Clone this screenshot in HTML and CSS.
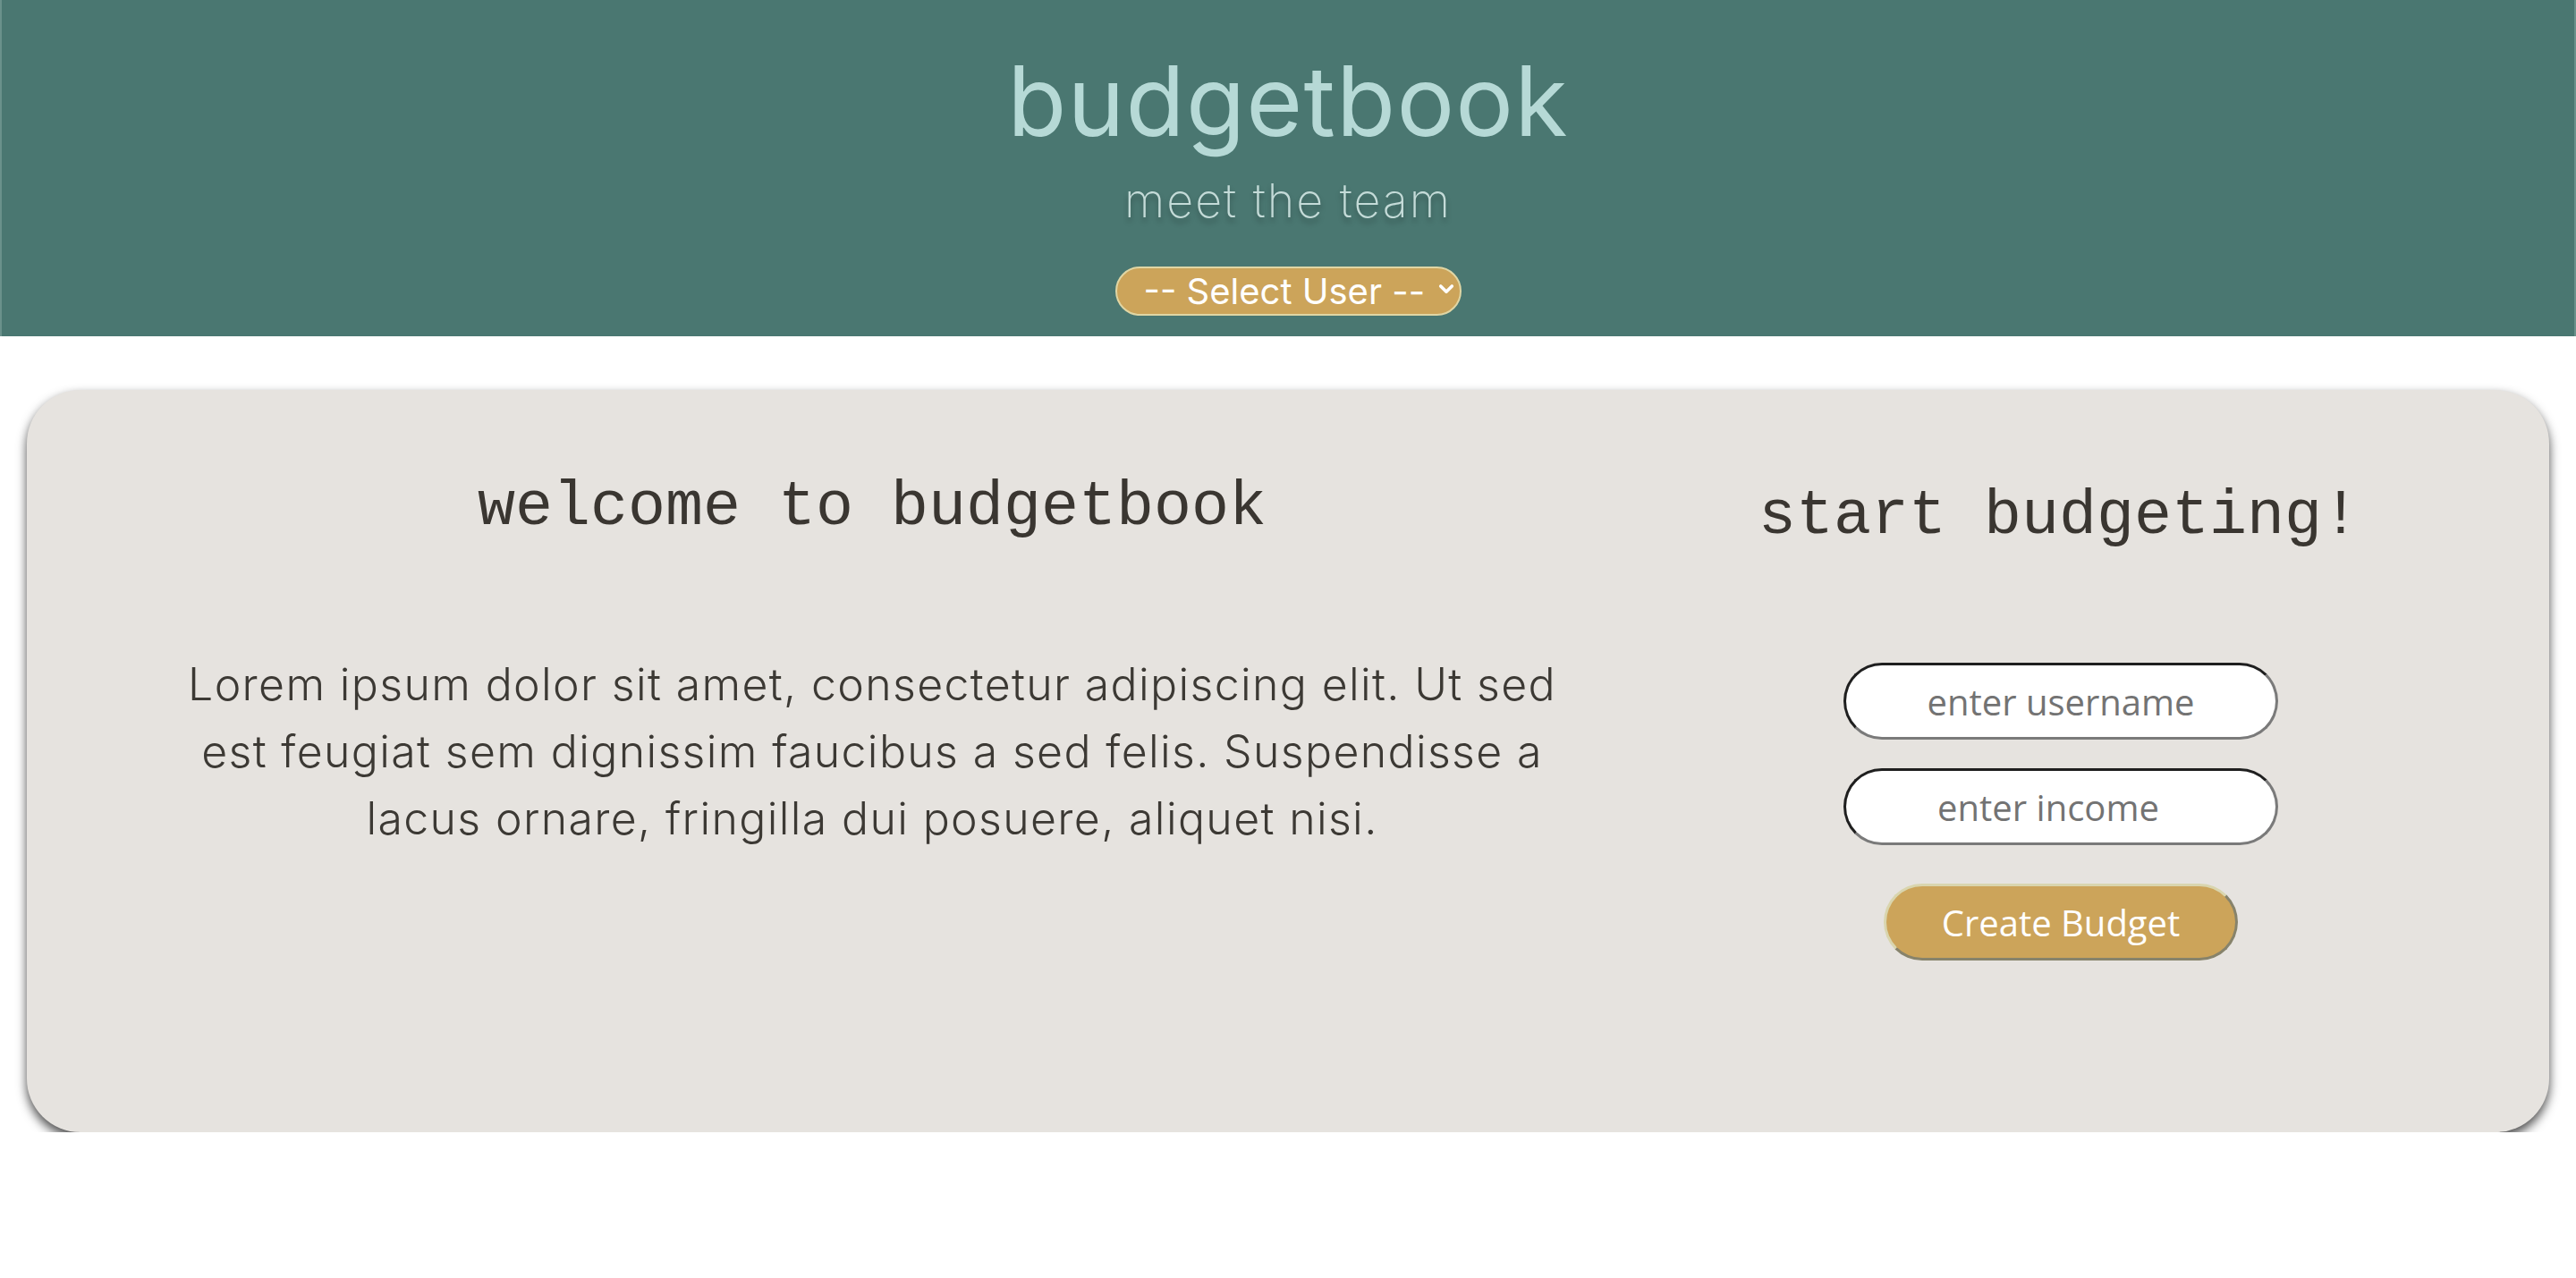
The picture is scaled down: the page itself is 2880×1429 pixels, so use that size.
FILE: index.html
```html
<!DOCTYPE html>
<html lang="en">
<head>
<meta charset="utf-8">
<title>budgetbook</title>
<link rel="stylesheet" href="styles.css">
</head>
<body>
<header class="site-header">
  <h1 class="brand">budgetbook</h1>
  <p class="tagline">meet the team</p>
  <div class="user-select">
    <select class="user-select__control">
      <option>-- Select User --</option>
    </select>
    <svg class="user-select__chevron" viewBox="0 0 20 14" aria-hidden="true"><path d="M3 3 L10 10 L17 3" fill="none" stroke="#fff" stroke-width="4" stroke-linecap="round" stroke-linejoin="round"/></svg>
  </div>
</header>

<main class="card">
  <section class="welcome">
    <h2 class="mono-heading">welcome to budgetbook</h2>
    <p class="intro">Lorem ipsum dolor sit amet, consectetur adipiscing elit. Ut sed est feugiat sem dignissim faucibus a sed felis. Suspendisse a lacus ornare, fringilla dui posuere, aliquet nisi.</p>
  </section>
  <section class="start">
    <h2 class="mono-heading mono-heading--lower">start budgeting!</h2>
    <form class="start-form">
      <input class="pill-input" type="text" placeholder="enter username">
      <input class="pill-input pill-input--number" type="text" placeholder="enter income">
      <button class="create-btn" type="button">Create Budget</button>
    </form>
  </section>
</main>
</body>
</html>
```

FILE: styles.css
```css
html, body {
  margin: 0;
  padding: 0;
  background: #ffffff;
}

body {
  font-family: Inter, "Noto Sans", sans-serif;
}

.site-header {
  background: #4a7771;
  display: flex;
  flex-direction: column;
  align-items: center;
  padding: 59px 0 23px;
  border-left: 2px solid #6a918b;
  border-right: 2px solid #6a918b;
}

.brand {
  margin: 0;
  font-family: Inter, sans-serif;
  font-weight: 400;
  font-size: 108px;
  line-height: 108px;
  color: #b6d9d6;
  letter-spacing: 1.2px;
}

.tagline {
  margin: 28px 0 0;
  font-family: Inter, sans-serif;
  font-weight: 200;
  font-size: 52px;
  line-height: 60px;
  color: #c4dbd8;
  letter-spacing: 2px;
  text-shadow: 0 5px 6px rgba(0, 0, 0, 0.28);
}

.user-select {
  position: relative;
  margin-top: 43px;
  width: 387px;
  height: 55px;
}

.user-select__control {
  appearance: none;
  -webkit-appearance: none;
  width: 100%;
  height: 100%;
  box-sizing: border-box;
  background: #cca45a;
  border: 2px solid #e0d6a4;
  border-radius: 28px;
  color: #ffffff;
  font-family: Inter, sans-serif;
  font-size: 40px;
  padding: 0 0 0 30px;
  outline: none;
}

.user-select__chevron {
  position: absolute;
  right: 8px;
  top: 19px;
  width: 18px;
  height: 13px;
  pointer-events: none;
}

.card {
  margin: 60px 30px 0;
  height: 830px;
  box-sizing: border-box;
  background: #e6e3df;
  border-radius: 60px;
  box-shadow: 0 6px 12px rgba(0, 0, 0, 0.7);
  display: grid;
  grid-template-columns: 1890px 764px;
  align-items: start;
  padding-top: 92px;
}

.welcome,
.start {
  display: flex;
  flex-direction: column;
  align-items: center;
}

.mono-heading {
  margin: 0;
  font-family: "Liberation Mono", "DejaVu Sans Mono", monospace;
  font-weight: 400;
  font-size: 70px;
  line-height: 80px;
  color: #3a3631;
  white-space: nowrap;
}

.mono-heading--lower {
  margin-top: 10px;
}

.intro {
  margin: 120px 0 0;
  width: 1570px;
  text-align: center;
  font-family: Inter, sans-serif;
  font-weight: 300;
  font-size: 50px;
  line-height: 75px;
  color: #3c3934;
  letter-spacing: 1.35px;
}

.start-form {
  margin-top: 123px;
  display: flex;
  flex-direction: column;
  align-items: center;
  padding-left: 4px;
}

.pill-input {
  width: 486px;
  height: 86px;
  box-sizing: border-box;
  margin: 0 0 32px;
  border-radius: 44px;
  border: 3px solid;
  border-color: #1f1f1f #7a7a7a #7a7a7a #1f1f1f;
  background: #ffffff;
  font-family: "Open Sans", "Noto Sans", sans-serif;
  font-size: 40px;
  text-align: center;
  padding: 0 20px;
  outline: none;
}

.pill-input::placeholder {
  color: #737373;
}

.pill-input--number {
  padding-right: 48px;
}

.create-btn {
  margin-top: 11px;
  width: 396px;
  height: 86px;
  box-sizing: border-box;
  border-radius: 44px;
  border: 3px solid;
  border-color: #d9d5ae #87836b #87836b #d9d5ae;
  background: #cca45a;
  color: #ffffff;
  font-family: "Open Sans", "Noto Sans", sans-serif;
  font-size: 40px;
  padding: 0;
}
```
